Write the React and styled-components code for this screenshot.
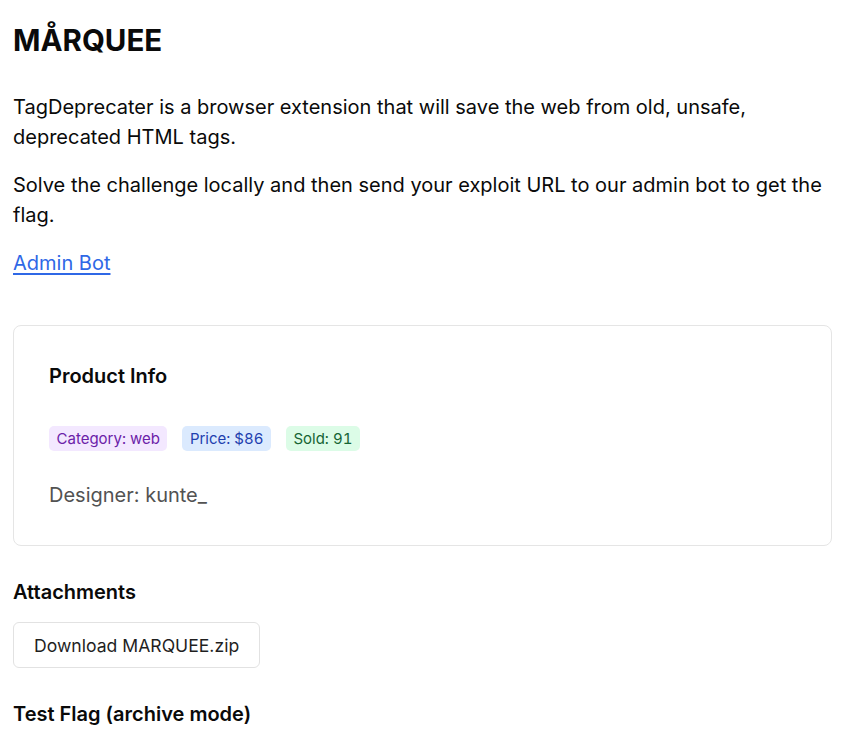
import React from 'react'
import styled, { createGlobalStyle } from 'styled-components'

const GlobalStyle = createGlobalStyle`
  body {
    margin: 0;
    background: #ffffff;
    font-family: Inter, "Noto Sans", sans-serif;
    color: #0a0a0a;
  }
`

const Page = styled.div`
  padding: 23px 18px 0 13px;
`

const Title = styled.h1`
  font-size: 29.5px;
  font-weight: 700;
  line-height: 34px;
  margin: 0 0 35px;
`

const Text = styled.p`
  font-size: 20px;
  line-height: 30px;
  margin: 0 0 18px;
`

const Link = styled.a`
  color: #2f68e6;
  text-decoration: underline;
  text-underline-offset: 3px;
`

const Card = styled.div`
  margin-top: 47px;
  border: 1px solid #e5e5e5;
  border-radius: 8px;
  padding: 35px;
`

const CardTitle = styled.h3`
  font-size: 20px;
  font-weight: 600;
  line-height: 30px;
  margin: 0 0 35px;
`

const Badges = styled.div`
  display: flex;
  gap: 15px;
  margin-bottom: 29px;
`

const Badge = styled.span`
  font-size: 15px;
  line-height: 25px;
  padding: 0 7.5px;
  border-radius: 5px;
  font-variant-numeric: tabular-nums;
  background: ${p => p.bg};
  color: ${p => p.fg};
`

const Designer = styled.div`
  font-size: 20px;
  line-height: 30px;
  color: #525252;
`

const SectionTitle = styled.h3`
  font-size: 20px;
  font-weight: 600;
  line-height: 30px;
  margin: 31px 0 15px;
`

const Button = styled.button`
  font-family: Inter, "Noto Sans", sans-serif;
  font-size: 17.6px;
  color: #1f1f1f;
  background: #ffffff;
  border: 1px solid #e2e2e2;
  border-radius: 6px;
  height: 46px;
  padding: 0 20px;
  cursor: pointer;
`

const badges = [
  { label: 'Category: web', bg: '#f3e8ff', fg: '#6b21a8' },
  { label: 'Price: $86', bg: '#dbeafe', fg: '#1e40af' },
  { label: 'Sold: 91', bg: '#dcfce7', fg: '#166534' },
]

export default function App() {
  return (
    <Page>
      <GlobalStyle />
      <Title>MÅRQUEE</Title>
      <Text>TagDeprecater is a browser extension that will save the web from old, unsafe, deprecated HTML tags.</Text>
      <Text>Solve the challenge locally and then send your exploit URL to our admin bot to get the flag.</Text>
      <Text>
        <Link href="#">Admin Bot</Link>
      </Text>
      <Card>
        <CardTitle>Product Info</CardTitle>
        <Badges>
          {badges.map(b => (
            <Badge key={b.label} bg={b.bg} fg={b.fg}>{b.label}</Badge>
          ))}
        </Badges>
        <Designer>Designer: kunte_</Designer>
      </Card>
      <SectionTitle>Attachments</SectionTitle>
      <Button>Download MARQUEE.zip</Button>
      <SectionTitle>Test Flag (archive mode)</SectionTitle>
    </Page>
  )
}
